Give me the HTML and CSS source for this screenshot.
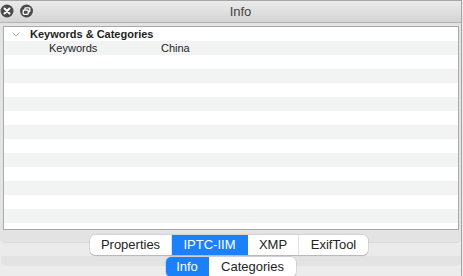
FILE: index.html
```html
<!DOCTYPE html>
<html>
<head>
<meta charset="utf-8">
<link rel="stylesheet" href="styles.css">
</head>
<body>
<div class="window">
  <div class="titlebar">
    <div class="controls">
      <svg width="40" height="22" viewBox="0 0 40 22">
        <circle cx="7" cy="11" r="6.5" fill="#4a4a4a"/>
        <path d="M4.5 8.5 L9.5 13.5 M9.5 8.5 L4.5 13.5" stroke="#fff" stroke-width="1.9" stroke-linecap="round"/>
        <circle cx="26.5" cy="11" r="6.5" fill="#4a4a4a"/>
        <rect x="23.2" y="10.2" width="5" height="4.2" rx="0.8" fill="none" stroke="#fff" stroke-width="1.3"/>
        <path d="M25 10 V8.6 Q25 7.8 25.8 7.8 H29 Q29.8 7.8 29.8 8.6 V11 Q29.8 11.8 29 11.8 H28.4" fill="none" stroke="#fff" stroke-width="1.3"/>
      </svg>
    </div>
    <div class="title">Info</div>
  </div>
  <div class="panel">
    <div class="table">
      <div class="row header">
        <svg class="chev" width="8" height="5" viewBox="0 0 8 5"><path d="M0.5 0.5 L4 4 L7.5 0.5" fill="none" stroke="#b4b4b4" stroke-width="1"/></svg>
        <span>Keywords &amp; Categories</span>
      </div>
      <div class="row item">
        <span class="key">Keywords</span>
        <span class="val">China</span>
      </div>
    </div>
  </div>
  <div class="band"></div>
  <div class="strip"></div>
  <div class="rest"></div>
  <div class="seg seg1">
    <div class="s" style="width:82px">Properties</div>
    <div class="s on" style="width:76px">IPTC-IIM</div>
    <div class="s" style="width:51px">XMP</div>
    <div class="s last" style="width:69px">ExifTool</div>
  </div>
  <div class="seg seg2">
    <div class="s on first" style="width:43px">Info</div>
    <div class="s last" style="width:87px">Categories</div>
  </div>
</div>
</body>
</html>
```

FILE: styles.css
```css
html, body {
  margin: 0;
  padding: 0;
  background: #ececec;
  width: 463px;
  height: 276px;
  overflow: hidden;
  font-family: "Liberation Sans", Arial, sans-serif;
}
.window {
  width: 461px;
  height: 276px;
  border-right: 1px solid #a3a3a3;
  background: #ececec;
  display: grid;
  grid-template-columns: 461px;
  grid-template-rows: 23px 220px 13px 10px 10px;
  overflow: hidden;
}
.titlebar {
  grid-row: 1;
  grid-column: 1;
  box-sizing: border-box;
  border-top: 1px solid #a6a6a6;
  border-bottom: 1px solid #b3b3b3;
  background: linear-gradient(#ebebeb, #d4d4d4);
  display: flex;
  align-items: center;
}
.controls {
  display: flex;
  margin-top: -1px;
}
.controls svg { display: block; }
.title {
  flex: 1;
  text-align: center;
  font-size: 13px;
  color: #444;
  margin-left: -40px;
  padding-left: 20px;
}
.panel {
  grid-row: 2;
  grid-column: 1;
  background: #e3e3e3;
  border-radius: 0 0 5px 5px;
  box-sizing: border-box;
  padding: 3px 2px 0 3px;
  border-bottom: 1px solid #dadada;
}
.table {
  height: 204px;
  box-sizing: border-box;
  border: 1px solid #a9a9a9;
  overflow: hidden;
  background: repeating-linear-gradient(#ffffff 0, #ffffff 14px, #f2f3f3 14px, #f2f3f3 28px);
  font-size: 11px;
  color: #1e1e1e;
}
.row {
  height: 14px;
  line-height: 14px;
  display: flex;
  align-items: center;
  white-space: nowrap;
}
.header {
  font-weight: bold;
}
.chev {
  margin-left: 8px;
  margin-right: 10px;
  margin-top: 1px;
}
.key {
  margin-left: 45px;
  width: 112px;
}
.band {
  grid-row: 3;
  grid-column: 1;
  background: #ebebeb;
}
.strip {
  grid-row: 4;
  grid-column: 1;
  background: #e3e3e3;
  border-radius: 0 0 5px 5px;
  margin-left: 1px;
}
.rest {
  grid-row: 5;
  grid-column: 1;
  background: #ececec;
}
.seg {
  display: flex;
  height: 20px;
  background: #fff;
  border-radius: 5px;
  box-shadow: 0 0 0 0.5px rgba(0,0,0,0.14), 0 1px 1px rgba(0,0,0,0.16);
  justify-self: start;
  font-size: 13px;
  color: #242424;
  overflow: hidden;
}
.seg1 {
  grid-row: 2 / 4;
  grid-column: 1;
  align-self: end;
  margin-bottom: 1px;
  margin-left: 90px;
}
.seg2 {
  grid-row: 4 / 6;
  grid-column: 1;
  align-self: start;
  margin-top: 1px;
  margin-left: 166px;
}
.s {
  box-sizing: border-box;
  text-align: center;
  line-height: 20px;
  border-right: 1px solid #e2e2e2;
}
.s.last { border-right: none; }
.s.on {
  background: #1a81fb;
  color: #fff;
  border-right-color: #1a81fb;
}
```
